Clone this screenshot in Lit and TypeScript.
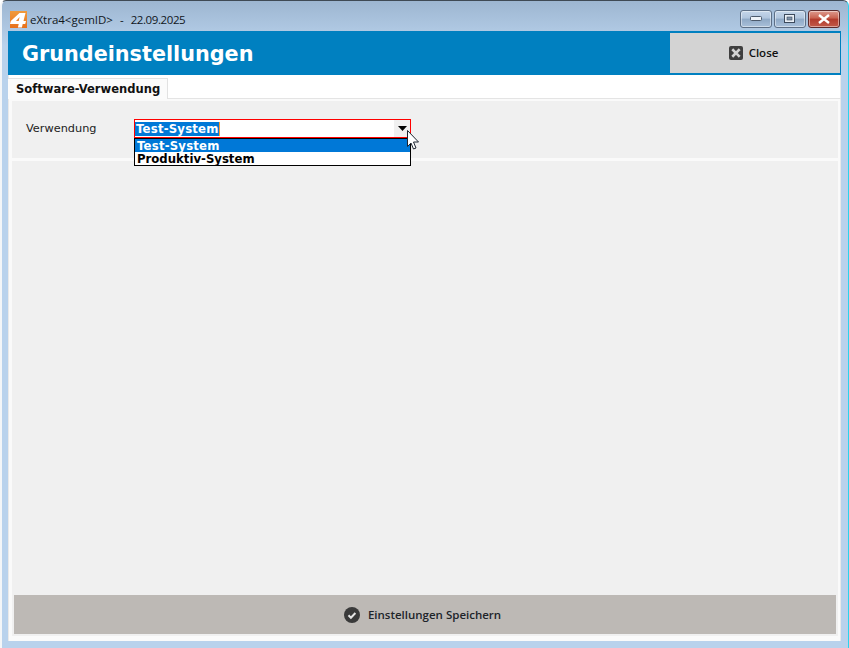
import { LitElement, html, css } from "lit";
import { customElement } from "lit/decorators.js";

@customElement("app-root")
export class AppRoot extends LitElement {
  static styles = css`
    :host { display: block; width: 849px; height: 648px; overflow: hidden; }
    .win { box-sizing: border-box; width: 849px; height: 648px; display: flex; flex-direction: column;
      padding: 0 7px 7px 6px; position: relative; border-radius: 6px 6px 0 0;
      background: linear-gradient(180deg, #9db6d1 0, #b9d2ec 45px, #b9d2ec 100%);
      border-top: 1px solid #3f4a55; border-left: 2px solid #f4f6f8; border-right: 1px solid #28d4ee; }
    .title { height: 30px; flex: none; display: flex; align-items: center; position: relative; }
    .logo { position: absolute; left: 2px; top: 10px; width: 17px; height: 17px; }
    .ttext { position: absolute; left: 22px; top: 10px; display: flex; font: 11.5px/17px "Open Sans", sans-serif; color: #10161c; white-space: pre; }
    .dash { margin: 0 7px 0 7px; }
    .date { letter-spacing: -0.4px; }
    .ctrls { position: absolute; right: 1px; top: 9px; display: flex; gap: 2px; }
    .cb { box-sizing: border-box; height: 18px; width: 32px; border: 1px solid #5d6f86; border-radius: 3px;
      display: flex; align-items: center; justify-content: center;
      background: linear-gradient(180deg, #c5d6e9 0, #b0c5dd 45%, #8fa9c6 50%, #a9c0da 100%); box-shadow: inset 0 0 0 1px rgba(255,255,255,.45); }
    .cb.x { border-color: #5c2a2c; background: linear-gradient(180deg, #dd9a8e 0, #c9614f 45%, #b23a2c 50%, #c25a4a 100%); }
    .panel { flex: 1; display: flex; flex-direction: column; background: #fff; min-height: 0; box-shadow: inset 0 0 0 1px #e9e9e9; }
    .head { height: 44px; flex: none; box-sizing: border-box; background: #0080c0; display: flex; align-items: center;
      justify-content: space-between; padding: 2px 1px 2px 14px; }
    h1 { margin: 2px 0 0; font: bold 20.75px "DejaVu Sans", sans-serif; color: #fff; }
    .close { width: 170px; height: 40px; background: #d3d3d3; display: flex; align-items: center; justify-content: center; gap: 6px;
      font: 600 11.5px "Open Sans", sans-serif; color: #111; padding: 0 3px 1px 0; box-sizing: border-box; }
    .tabs { height: 24px; flex: none; box-sizing: border-box; border-bottom: 1px solid #e4e4e4; display: flex; padding-top: 3px; }
    .tab { box-sizing: border-box; width: 160px; height: 21px; background: #fbfbfb; border: 1px solid #e2e2e2; border-left: 0; border-bottom: 0;
      font: bold 11.55px/20px "DejaVu Sans", sans-serif; color: #111; padding-left: 8px; }
    .body { flex: 1; display: flex; flex-direction: column; padding: 2px 2px 5px 3px; min-height: 0; gap: 3px; background: #fafafa; margin: 0 1px; }
    .top { height: 57px; flex: none; background: #f0f0f0; position: relative; display: flex; padding: 18px 0 0 14px; box-sizing: border-box; }
    .lbl { font: 11.3px/20px "DejaVu Sans", sans-serif; color: #222; }
    .fill { flex: 1; background: #f0f0f0; display: flex; flex-direction: column; justify-content: flex-end; padding: 0 2px 2px 2px; }
    .save { height: 39px; background: #bdb9b5; display: flex; align-items: center; justify-content: center; gap: 8px;
      font: 600 11.5px "Open Sans", sans-serif; color: #20242a; padding-right: 5px; }
    .combo { width: 277px; position: absolute; left: 122px; top: 18px; }
    .field { box-sizing: border-box; height: 19px; border: 1px solid #f00; background: #fff; position: relative; display: flex; align-items: center; }
    .sel { background: #0078d7; color: #fff; font: bold 11.7px/14px "DejaVu Sans", sans-serif; letter-spacing: .2px; padding: 0 0 0 1px; border-right: 1px solid #ff9a2e; }
    .arrow { position: absolute; right: 0; top: 0; bottom: 0; width: 16px; background: #f0f0f0; display: flex; align-items: center; justify-content: center; }
    .list { box-sizing: border-box; height: 28px; border: 1px solid #000; background: #fff; }
    .it { height: 13px; font: bold 11.7px/15px "DejaVu Sans", sans-serif; color: #000; padding-left: 2px; overflow: hidden; }
    .it.on { background: #0078d7; color: #fff; letter-spacing: .2px; }
    .cursor { position: absolute; left: 395px; top: 29px; width: 12px; height: 20px; }
  `;

  render() {
    return html`<div class="win">
      <div class="title">
        <svg class="logo" viewBox="0 0 17 17">
          <defs><linearGradient id="lg" x1="0" y1="0" x2="0" y2="1"><stop offset="0" stop-color="#f09a3c"/><stop offset="1" stop-color="#e8701a"/></linearGradient></defs>
          <rect width="17" height="17" fill="url(#lg)"/>
          <path d="M9.500 2h6l-2 8h2.500l-.8 3h-2.500l-.8 3.500h-4l.8-3.500H0l.8-3z" fill="#fff"/>
          <path d="M9.600 6L6 10h2.700z" fill="#ef8428"/>
        </svg>
        <span class="ttext"><span>eXtra4&lt;gemID&gt;</span><span class="dash">-</span><span class="date">22.09.2025</span></span>
        <div class="ctrls">
          <div class="cb"><svg width="12" height="6"><rect x=".5" y=".5" width="11" height="4" rx="1" fill="#eef3f8" stroke="#4c5a6c"/></svg></div>
          <div class="cb"><svg width="12" height="10"><rect x=".5" y=".5" width="10" height="8" fill="#e9eff6" stroke="#3c4a5c"/><rect x="3" y="3" width="5" height="3" fill="#7f93aa" stroke="#3c4a5c" stroke-width=".6"/></svg></div>
          <div class="cb x"><svg width="14" height="10" viewBox="0 0 14 10"><path d="M2 1l10 8M12 1L2 9" stroke="#fff" stroke-width="2.400" fill="none"/></svg></div>
        </div>
      </div>
      <div class="panel">
        <div class="head">
          <h1>Grundeinstellungen</h1>
          <div class="close">
            <svg width="14" height="14" viewBox="0 0 14 14"><rect width="14" height="14" rx="2" fill="#3f3f3f"/><path d="M4.200 4.200l5.600 5.600M9.800 4.200l-5.600 5.600" stroke="#d3d3d3" stroke-width="2.600" stroke-linecap="square"/></svg>
            Close
          </div>
        </div>
        <div class="tabs"><div class="tab">Software-Verwendung</div></div>
        <div class="body">
          <div class="top">
            <div class="lbl">Verwendung</div>
            <div class="combo">
              <div class="field">
                <span class="sel">Test-System</span>
                <span class="arrow"><svg width="9" height="5"><path d="M0 0h9L4.500 5z" fill="#000"/></svg></span>
              </div>
              <div class="list">
                <div class="it on">Test-System</div>
                <div class="it">Produktiv-System</div>
              </div>
            </div>
            <svg class="cursor" viewBox="0 0 12 20"><path d="M.5.500v16l3.500-3.500 2.500 6 2.500-1-2.500-6h5z" fill="#fff" stroke="#1c2430" stroke-width="1"/></svg>
          </div>
          <div class="fill">
            <div class="save">
              <svg width="16" height="16" viewBox="0 0 16 16"><circle cx="8" cy="8" r="8" fill="#3a3a3a"/><path d="M4.500 8.300l2.400 2.400 4.500-4.700" stroke="#e6e6e6" stroke-width="2" fill="none"/></svg>
              Einstellungen Speichern
            </div>
          </div>
        </div>
      </div>
    </div>`;
  }
}
